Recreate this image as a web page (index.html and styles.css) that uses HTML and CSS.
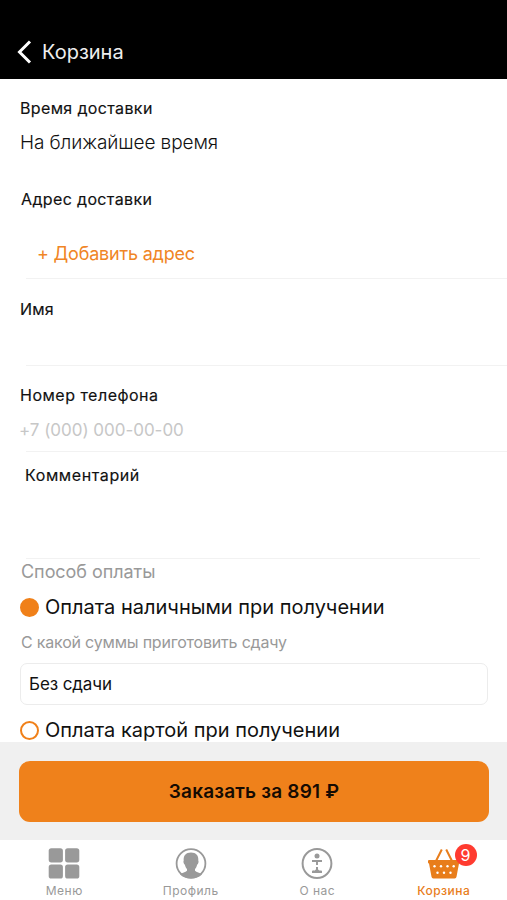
FILE: index.html
```html
<!DOCTYPE html>
<html lang="ru">
<head>
<meta charset="utf-8">
<title>Корзина</title>
<link rel="stylesheet" href="styles.css">
</head>
<body>
<div class="screen">
  <header class="header">
    <svg class="back" viewBox="0 0 15 24"><path d="M13 1.500 2.500 12 13 22.500"/></svg>
    <h1 class="title"><span>Корзина</span></h1>
  </header>
  <main class="form">
    <section class="row time">
      <div class="label label-time"><span>Время доставки</span></div>
      <div class="value"><span>На ближайшее время</span></div>
    </section>
    <section class="row address">
      <div class="label label-address"><span>Адрес доставки</span></div>
      <div class="add"><span>+ Добавить адрес</span></div>
    </section>
    <section class="row name"><div class="label label-name"><span>Имя</span></div></section>
    <section class="row phone">
      <div class="label label-phone"><span>Номер телефона</span></div>
      <div class="placeholder"><span>+7 (000) 000-00-00</span></div>
    </section>
    <section class="row comment"><div class="label label-comment"><span>Комментарий</span></div></section>
    <section class="payment">
      <div class="pay-title"><span>Способ оплаты</span></div>
      <div class="option"><i class="radio checked"></i><span class="cash">Оплата наличными при получении</span></div>
      <div class="hint"><span>С какой суммы приготовить сдачу</span></div>
      <div class="field"><span>Без сдачи</span></div>
      <div class="option"><i class="radio"></i><span class="card">Оплата картой при получении</span></div>
    </section>
  </main>
  <div class="bar"><div class="order"><span>Заказать за 891 ₽</span></div></div>
  <nav class="tabs">
    <div class="tab tab-menu">
      <svg class="icon" viewBox="0 0 32 32"><g fill="currentColor"><rect x=".7" y="1.200" width="14.200" height="14.200" rx="2.600"/><rect x="17.100" y="1.200" width="14.200" height="14.200" rx="2.600"/><rect x=".7" y="17.400" width="14.200" height="14.200" rx="2.600"/><rect x="17.100" y="17.400" width="14.200" height="14.200" rx="2.600"/></g></svg>
      <span>Меню</span>
    </div>
    <div class="tab tab-profile">
      <svg class="icon" viewBox="0 0 32 32"><circle cx="16" cy="16.500" r="14.400" fill="none" stroke="currentColor" stroke-width="1.800"/><path fill="currentColor" d="M16 5.500c-5.200 0-7.700 3-7.300 8-.7 1.300 0 3.600 1.200 4.300.4 2 1.100 3.200 2.100 4.200v1.700c-1.500 1.500-4.700 1.600-7 3.800C8 30.300 12 31.300 16 31.300s8-1 11-3.800c-2.300-2.200-5.500-2.300-7-3.800V22c1-1 1.700-2.200 2.100-4.200 1.200-.7 1.900-3 1.200-4.300.4-5-2.100-8-7.300-8Z"/></svg>
      <span>Профиль</span>
    </div>
    <div class="tab tab-about">
      <svg class="icon" viewBox="0 0 32 32"><circle cx="16" cy="16.500" r="14.400" fill="none" stroke="currentColor" stroke-width="2"/><circle cx="16" cy="9" r="2.500" fill="currentColor"/><path fill="none" stroke="currentColor" stroke-width="1.900" d="M11 14h10M16 14v4"/><path fill="currentColor" d="M15 20h2v2.300c.5 1.200 2 1.300 4 1.500v2.200H11v-2.200c2-.2 3.500-.3 4-1.500Z"/></svg>
      <span>О нас</span>
    </div>
    <div class="tab tab-cart">
      <svg class="icon" viewBox="0 0 32 32"><path fill="none" stroke="currentColor" stroke-width="2" d="M8 14 13.800 2.500M18.200 2.500 24 14"/><path fill="currentColor" d="M1 13h30q1 0 1 1v1.500q0 1-1 1l-2.500 13.300Q28.200 31.500 26.700 31.500H5.300Q3.800 31.500 3.500 29.800L1 16.500q-1 0-1-1V14q0-1 1-1Z"/><g fill="#fff"><circle cx="6.500" cy="19.300" r="1.200"/><circle cx="13" cy="19.300" r="1.200"/><circle cx="19.500" cy="19.300" r="1.200"/><circle cx="25.700" cy="19.300" r="1.200"/><circle cx="9.500" cy="25.700" r="1.200"/><circle cx="16" cy="25.700" r="1.200"/><circle cx="22.500" cy="25.700" r="1.200"/></g></svg>
      <b class="badge">9</b>
      <span>Корзина</span>
    </div>
  </nav>
</div>
</body>
</html>
```
FILE: styles.css
```css
* { box-sizing: border-box; }
body { margin: 0; background: #fff; font-family: Inter, "Liberation Sans", sans-serif; color: #111; }
.screen { width: 507px; height: 900px; overflow: hidden; display: flex; flex-direction: column; white-space: nowrap; }
.header { height: 79px; flex: none; background: #000; display: flex; align-items: flex-end; padding: 0 0 14px 17px; gap: 10px; }
.back { width: 15px; height: 24px; margin-bottom: 1px; fill: none; stroke: #fff; stroke-width: 3; }
.title { margin: 0; font-size: 20px; line-height: 26px; font-weight: 400; color: #eee; }
.form { height: 663px; flex: none; padding-left: 20px; overflow: hidden; }
.row { position: relative; }
.label { font-size: 16px; line-height: 22px; font-weight: 400; letter-spacing: .5px; -webkit-text-stroke: .15px #111; }
.time { height: 98px; padding-top: 18px; }
.label-time, .label-address { letter-spacing: .36px; }
.label-name { letter-spacing: .2px; }
.value { font-size: 19px; line-height: 26px; margin-top: 11px; font-weight: 300; letter-spacing: -.1px; color: #111; }
.address { height: 102px; padding-top: 11px; }
.label-address { padding-left: 1px; }
.add { padding: 31px 0 0 17px; font-size: 18px; line-height: 26px; letter-spacing: -.2px; color: #f08525; }
.name { height: 87px; padding-top: 19px; }
.phone { height: 86px; padding-top: 18px; }
.placeholder { font-size: 17px; line-height: 24px; margin-top: 12px; margin-left: -1px; letter-spacing: -.03px; color: #c7c7c7; }
.comment { height: 107px; padding-top: 12px; }
.label-comment { padding-left: 5px; letter-spacing: .6px; }
.address::after, .name::after, .phone::after, .comment::after { content: ""; position: absolute; left: 6px; right: 0; bottom: 0; height: 1px; background: #f2f2f2; }
.comment::after { right: 27px; }
.pay-title { font-size: 18px; line-height: 24px; padding: 1px 0 0 1px; letter-spacing: -.05px; color: #999; }
.option { display: flex; align-items: center; gap: 7px; height: 28px; font-size: 20px; line-height: 28px; }
.payment .pay-title + .option { margin-top: 9px; }
.radio { width: 19px; height: 19px; margin: 0 -1px 0 0; border: 2px solid #f08019; border-radius: 50%; }
.checked { background: #f08019; }
.hint { margin-top: 11px; padding-left: 1px; font-size: 16px; line-height: 20px; letter-spacing: -.2px; color: #999; }
.field { width: 468px; height: 42px; margin: 11px 0 11px; border: 1px solid #ececec; border-radius: 7px; padding-left: 8px; font-size: 17px; line-height: 41px; letter-spacing: -.1px; }
.bar { height: 98px; flex: none; background: #f0f0f0; padding: 19px 18px 18px 19px; }
.order { height: 61px; border-radius: 11px; background: #ef811b; color: #150b02; font-size: 19px; font-weight: 600; line-height: 61px; text-align: center; letter-spacing: .2px; }
.tabs { display: grid; grid-template-columns: repeat(4, 126.5px); height: 60px; }
.tab { position: relative; display: flex; flex-direction: column; align-items: center; padding-top: 7px; color: #999; font-size: 12px; line-height: 16px; font-weight: 400; letter-spacing: .5px; left: 1px; }
.icon { width: 32px; height: 32px; margin-bottom: 4px; }
.tab-cart { color: #e87d1b; font-weight: 500; }
.badge { position: absolute; left: 74px; top: 4px; width: 22px; height: 22px; border-radius: 50%; background: #ff3b30; color: #fff; font-size: 16px; font-weight: 400; line-height: 22px; text-align: center; letter-spacing: 0; }
```
